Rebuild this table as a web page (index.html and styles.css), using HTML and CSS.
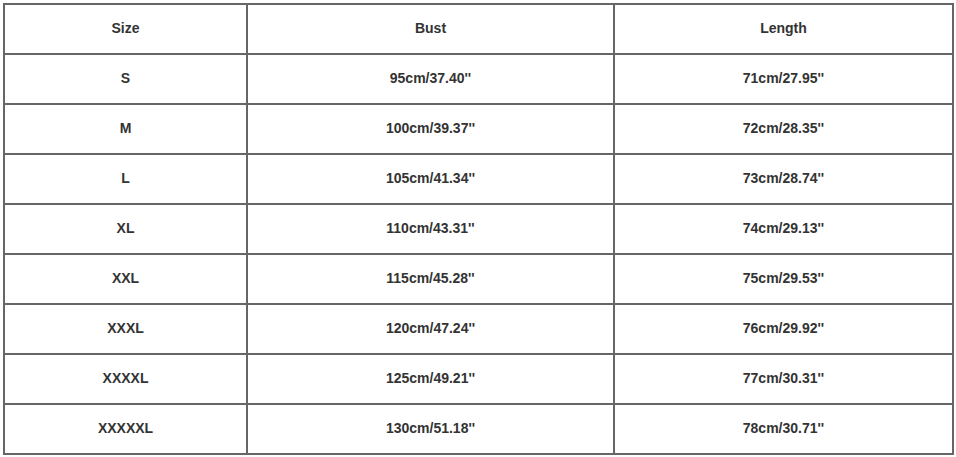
FILE: index.html
```html
<!DOCTYPE html>
<html>
<head>
<meta charset="utf-8">
<link rel="stylesheet" href="styles.css">
</head>
<body>
<div class="wrap">
<table class="size-table">
  <colgroup><col class="c1"><col class="c2"><col class="c3"></colgroup>
  <thead>
    <tr><th>Size</th><th>Bust</th><th>Length</th></tr>
  </thead>
  <tbody>
    <tr><td>S</td><td>95cm/37.40''</td><td>71cm/27.95''</td></tr>
    <tr><td>M</td><td>100cm/39.37''</td><td>72cm/28.35''</td></tr>
    <tr><td>L</td><td>105cm/41.34''</td><td>73cm/28.74''</td></tr>
    <tr><td>XL</td><td>110cm/43.31''</td><td>74cm/29.13''</td></tr>
    <tr><td>XXL</td><td>115cm/45.28''</td><td>75cm/29.53''</td></tr>
    <tr><td>XXXL</td><td>120cm/47.24''</td><td>76cm/29.92''</td></tr>
    <tr><td>XXXXL</td><td>125cm/49.21''</td><td>77cm/30.31''</td></tr>
    <tr><td>XXXXXL</td><td>130cm/51.18''</td><td>78cm/30.71''</td></tr>
  </tbody>
</table>
</div>
</body>
</html>
```
FILE: styles.css
```css
html, body {
  margin: 0;
  padding: 0;
  background: #ffffff;
}
.wrap {
  padding: 3px 0 0 3px;
}
.size-table {
  border-collapse: collapse;
  table-layout: fixed;
  width: 949px;
  font-family: "Liberation Sans", Arial, sans-serif;
  font-weight: bold;
  font-size: 14px;
  color: #333333;
}
.c1 { width: 243px; }
.c2 { width: 367px; }
.c3 { width: 339px; }
.size-table th,
.size-table td {
  border: 2px solid #666666;
  height: 50px;
  padding: 0 0 3px 0;
  box-sizing: border-box;
  text-align: center;
  vertical-align: middle;
}
.size-table th {
  font-weight: bold;
  font-size: 14px;
}
```
